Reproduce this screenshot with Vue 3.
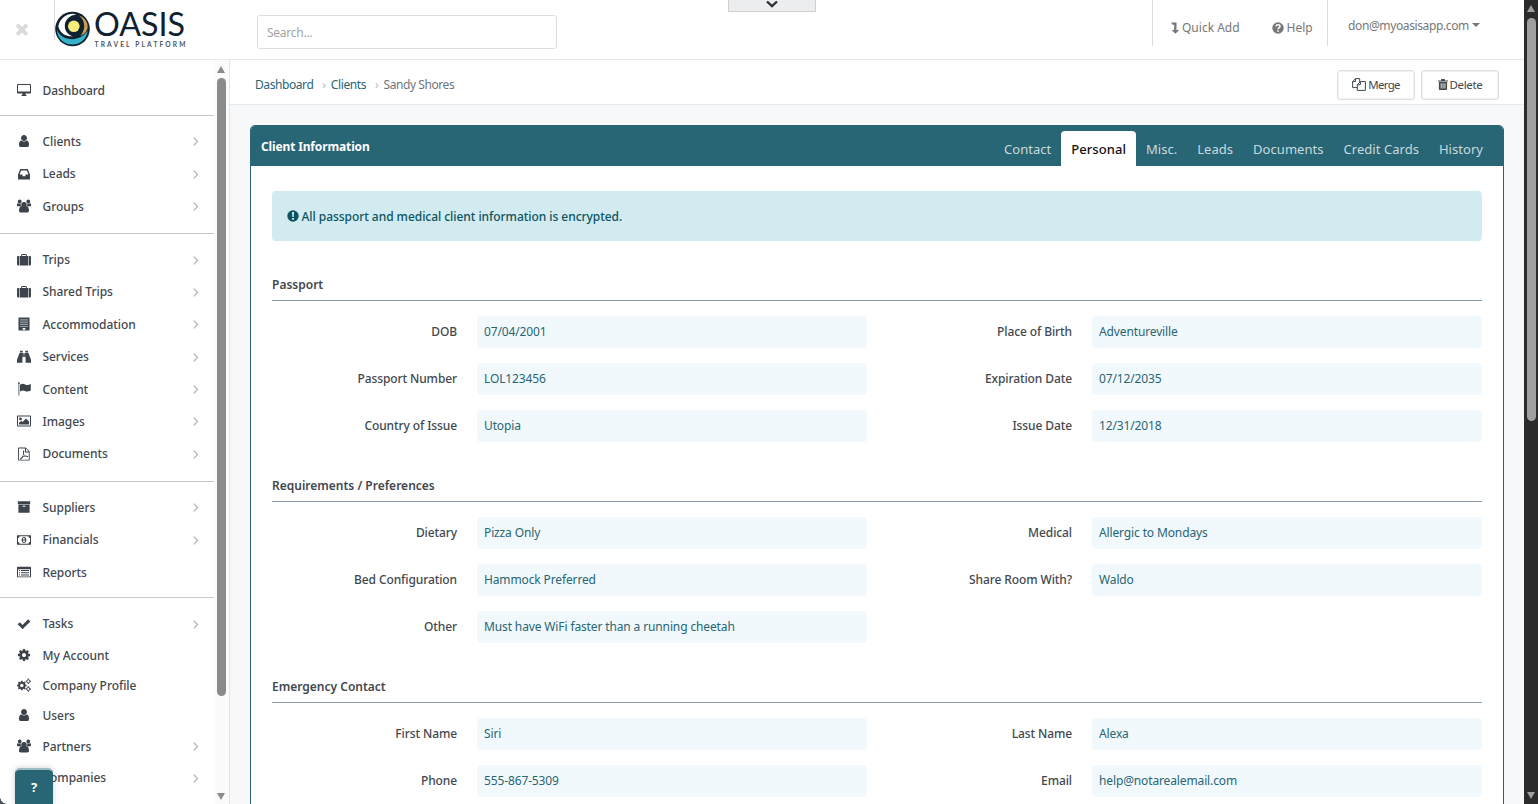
<script setup>
import { ref } from 'vue'

const FA = {
  check: 'M1671 566q0 40-28 68l-724 724-136 136q-28 28-68 28t-68-28l-136-136-362-362q-28-28-28-68t28-68l136-136q28-28 68-28t68 28l294 295 656-657q28-28 68-28t68 28l136 136q28 28 28 68z',
  cog: 'M1152 896q0-106-75-181t-181-75-181 75-75 181 75 181 181 75 181-75 75-181zm512-109v222q0 12-8 23t-20 13l-185 28q-19 54-39 91 35 50 107 138 10 12 10 25t-9 23q-27 37-99 108t-94 71q-12 0-26-9l-138-108q-44 23-91 38-16 136-29 186-7 28-36 28h-222q-14 0-24.5-8.5t-11.5-21.5l-28-184q-49-16-90-37l-141 107q-10 9-25 9-14 0-25-11-126-114-165-168-7-10-7-23 0-12 8-23 15-21 51-66.5t54-70.5q-27-50-41-99l-183-27q-13-2-21-12.5t-8-23.5v-222q0-12 8-23t19-13l186-28q14-46 39-92-40-57-107-138-10-12-10-24 0-10 9-23 26-36 98.5-107.5t94.5-71.5q13 0 26 10l138 107q44-23 91-38 16-136 29-186 7-28 36-28h222q14 0 24.5 8.5t11.5 21.5l28 184q49 16 90 37l142-107q9-9 24-9 13 0 25 10 129 119 165 170 7 8 7 22 0 12-8 23-15 21-51 66.5t-54 70.5q26 50 41 98l183 28q13 2 21 12.5t8 23.5z',
  user: 'M1536 1399q0 109-62.5 187t-150.5 78h-854q-88 0-150.5-78t-62.5-187q0-85 8.5-160.5t31.5-152 58.5-131 94-89 134.5-34.5q131 128 313 128t313-128q76 0 134.5 34.5t94 89 58.5 131 31.5 152 8.5 160.5zm-256-887q0 159-112.5 271.5t-271.5 112.5-271.5-112.5-112.5-271.5 112.5-271.5 271.5-112.5 271.5 112.5 112.5 271.5z',
  times: 'M1490 1322q0 40-28 68l-136 136q-28 28-68 28t-68-28l-294-294-294 294q-28 28-68 28t-68-28l-136-136q-28-28-28-68t28-68l294-294-294-294q-28-28-28-68t28-68l136-136q28-28 68-28t68 28l294 294 294-294q28-28 68-28t68 28l136 136q28 28 28 68t-28 68l-294 294 294 294q28 28 28 68z',
}

// icons on a 14px grid
const icons = {
  desktop: 'M1 1h12a1 1 0 0 1 1 1v7.6a1 1 0 0 1-1 1H8.6v1.2l.9.4v.8h-5v-.8l.9-.4v-1.2H1a1 1 0 0 1-1-1V2a1 1 0 0 1 1-1zm0 1v6.4h12V2z',
  inbox: 'M3.2 2h7.6L13 7.4V12a.6.6 0 0 1-.6.6H1.6A.6.6 0 0 1 1 12V7.4zM4.1 3.5 2.5 7.6h2.6l.8 1.6h2.2l.8-1.6h2.6L9.9 3.5z',
  users: 'M7 2.900a2.700 2.700 0 1 1 0 5.400 2.700 2.700 0 0 1 0-5.400zM2.700.600a1.900 1.900 0 1 1 0 3.800 1.900 1.900 0 0 1 0-3.800zM11.300.600a1.900 1.900 0 1 1 0 3.800 1.900 1.900 0 0 1 0-3.800zM0 7V5.400C0 4.500.5 4 1 4.200c1 .7 1.800.7 2.800.2A3.400 3.400 0 0 0 4.400 7.300H.9A.9.900 0 0 1 0 7zM14 7V5.400C14 4.500 13.500 4 13 4.200c-1 .7-1.800.7-2.800.2A3.400 3.400 0 0 1 9.600 7.300h3.500A.9.900 0 0 0 14 7zM2 11.800c0-2.800.8-4.600 2.500-4.600 1.600 1.400 3.400 1.400 5 0 1.700 0 2.500 1.800 2.500 4.600 0 1-.7 1.700-1.700 1.700H3.700c-1 0-1.700-.7-1.700-1.700z',
  suitcase: 'M0 4.200A1.200 1.200 0 0 1 1.200 3h.9v9.500h-.9A1.200 1.200 0 0 1 0 11.300zM14 4.200A1.200 1.200 0 0 0 12.800 3h-.9v9.500h.9a1.200 1.200 0 0 0 1.200-1.200zM2.700 3H4.200V1.900c0-.5.4-.9.900-.9h3.800c.5 0 .9.400.9.900V3h1.500v9.500H2.700zM5.200 2v1h3.600V2z',
  building: 'M1.500.5h11v13h-11zM3.500 2.300v1.200h1V2.300zm2 0v1.200h1V2.300zm2 0v1.200h1V2.300zm2 0v1.200h1V2.300zM3.500 4.500v1.200h1V4.500zm2 0v1.200h1V4.500zm2 0v1.200h1V4.500zm2 0v1.200h1V4.500zM3.500 6.700v1.200h1V6.700zm2 0v1.200h1V6.700zm2 0v1.200h1V6.700zm2 0v1.200h1V6.700zM3.500 8.900v1.200h1V8.900zm2 0v1.200h1V8.900zm2 0v1.200h1V8.900zm2 0v1.200h1V8.900zM5.700 11v1.700h2.600V11z',
  binoculars: 'M3 .8h2.700v1.500H3zM8.300.8H11v1.500H8.300zM2.700 2.800h3.200v4.400H5.400v5.600H0V9.700zM8.100 2.800h3.200L14 9.700v3.100H8.600V7.200h-.5zM6.200 3.300h1.600v3.600H6.200z',
  flag: 'M1 1.200a.9.900 0 1 1 1.300.8v11.400h-.8V2A.9.900 0 0 1 1 1.200zM3 2.800c2-1.200 3.400-1.200 5.200-.3 1.800.8 3.200.7 5.600-.5v6.400c-2.400 1.400-4 1.400-5.800.5-1.600-.8-3-.7-5 .5z',
  image: 'M.8 1.500h12.400c.5 0 .8.300.8.800v9.400c0 .5-.3.800-.8.800H.8c-.5 0-.8-.3-.8-.8V2.300c0-.5.300-.8.800-.8zM1 2.500v9h12v-9zM3.500 3.500a1.400 1.400 0 1 1 0 2.800 1.400 1.400 0 0 1 0-2.800zM2 10.500V9l2.200-2.200 1.300 1.300L9 4.600l3 3v2.900z',
  pdf: 'M1.800.5h6.900l4 4v8.400c0 .4-.3.700-.7.700H1.800c-.4 0-.7-.3-.7-.7V1.200c0-.4.300-.7.700-.7zM2 1.400v11.300h9.800V5.400H8V1.400zm7 .3v2.800h2.700zM6.200 3.500h.9c.2 1.300 0 2.200-.2 3 .4 1.200 1 1.900 2 2.300 1.200 0 2.300.1 2.300.7 0 .8-1.300.6-2.500.1-1 .1-2.100.400-3.100.800-.8 1.400-1.700 2.200-2.400 1.800-.5-.5.400-1.500 1.700-2.200.6-1 1-2.200 1.300-3.300-.3-1-.4-2.200 0-3.200zm.4 4.200L5.900 9.300 8 8.900z',
  archive: 'M.8 1.200h12.400v3H.8zM1.400 4.700h11.200v8H1.400zM5.600 5.800v.9h2.800v-.9z',
  money: 'M0 2.300h14v9.400H0zM2.600 3.300A1.700 1.700 0 0 1 1 4.900v4.200a1.700 1.700 0 0 1 1.600 1.600h8.800A1.700 1.700 0 0 1 13 9.100V4.900a1.700 1.700 0 0 1-1.600-1.600zM7 3.900c1.400 0 2.400 1.500 2.400 3.100S8.400 10.100 7 10.100 4.600 8.600 4.600 7 5.600 3.900 7 3.900zM6.700 5 5.700 5.700l.4.600.4-.2v2.200h-.7V9h2.400v-.7h-.7V5z',
  list: 'M.8 1.700h12.400c.5 0 .8.300.8.800v9c0 .5-.3.800-.8.800H.8c-.5 0-.8-.3-.8-.8v-9c0-.5.300-.8.800-.8zM1 4.200v7.200h12V4.200zM2 5h1v1H2zM4 5h8v1H4zM2 7.200h1v1H2zM4 7.200h8v1H4zM2 9.400h1v1H2zM4 9.400h8v1H4z',
  cogs: 'M4 2.700h1.600l.2 1.200.8.400 1-.7 1.100 1.100-.7 1 .4.800 1.200.2v1.600l-1.200.2-.4.800.7 1-1.100 1.100-1-.7-.8.400-.2 1.200H4l-.2-1.200-.8-.4-1 .7L.9 10.300l.7-1-.4-.8L0 8.300V6.700l1.200-.2.400-.8-.7-1L2 3.600l1 .7.8-.4zM4.800 5.700a1.800 1.800 0 1 0 0 3.600 1.800 1.800 0 0 0 0-3.600z',
}

const menu = [
  [{ label: 'Dashboard', icon: 'desktop' }],
  [
    { label: 'Clients', icon: 'user', sub: true },
    { label: 'Leads', icon: 'inbox', sub: true },
    { label: 'Groups', icon: 'users', sub: true },
  ],
  [
    { label: 'Trips', icon: 'suitcase', sub: true },
    { label: 'Shared Trips', icon: 'suitcase', sub: true },
    { label: 'Accommodation', icon: 'building', sub: true },
    { label: 'Services', icon: 'binoculars', sub: true },
    { label: 'Content', icon: 'flag', sub: true },
    { label: 'Images', icon: 'image', sub: true },
    { label: 'Documents', icon: 'pdf', sub: true },
  ],
  [
    { label: 'Suppliers', icon: 'archive', sub: true },
    { label: 'Financials', icon: 'money', sub: true },
    { label: 'Reports', icon: 'list' },
  ],
  [
    { label: 'Tasks', icon: 'check', sub: true },
    { label: 'My Account', icon: 'cog' },
    { label: 'Company Profile', icon: 'cogs' },
    { label: 'Users', icon: 'user' },
    { label: 'Partners', icon: 'users', sub: true },
    { label: 'Companies', icon: 'building', sub: true },
  ],
]

const tabs = ['Contact', 'Personal', 'Misc.', 'Leads', 'Documents', 'Credit Cards', 'History']
const activeTab = ref('Personal')

const sections = [
  {
    title: 'Passport',
    fields: [
      ['DOB', '07/04/2001'],
      ['Place of Birth', 'Adventureville'],
      ['Passport Number', 'LOL123456'],
      ['Expiration Date', '07/12/2035'],
      ['Country of Issue', 'Utopia'],
      ['Issue Date', '12/31/2018'],
    ],
  },
  {
    title: 'Requirements / Preferences',
    fields: [
      ['Dietary', 'Pizza Only'],
      ['Medical', 'Allergic to Mondays'],
      ['Bed Configuration', 'Hammock Preferred'],
      ['Share Room With?', 'Waldo'],
      ['Other', 'Must have WiFi faster than a running cheetah'],
    ],
  },
  {
    title: 'Emergency Contact',
    fields: [
      ['First Name', 'Siri'],
      ['Last Name', 'Alexa'],
      ['Phone', '555-867-5309'],
      ['Email', 'help@notarealemail.com'],
    ],
  },
]
</script>

<template>
  <div class="window">
    <div class="app">
      <header class="topbar">
        <div class="close-menu">
          <svg width="18" height="18" viewBox="0 0 1792 1792"><path :d="FA.times" /></svg>
        </div>
        <div class="brand">
          <svg width="136" height="44" viewBox="0 0 136 44">
            <circle cx="18.5" cy="22" r="17.3" fill="#10212f" />
            <path d="M4.300 19A14.800 14.800 0 0 1 22.500 7.200C15 8.500 10.600 13 10.800 19.500 11 24.500 14.500 28 19 29.300 11 29.800 5.500 25.500 4.300 19z" fill="#fff" />
            <path d="M2.900 22.500C5.500 29.500 12.500 33 20.500 32 26 31.200 30.500 28.500 33.600 23.500 33 31.500 26.500 37.600 18.500 37.600 9.800 37.600 3 31 2.900 22.500z" fill="#35b4c9" />
            <path d="M24.500 8.300C31 10.500 35 16.500 33.300 22.300 31.800 25.600 29.500 27.800 26.300 29 29.800 25 31 20.500 29.800 15.800 29 12.500 27.300 10 24.500 8.300z" fill="#cf9d50" />
            <circle cx="19.8" cy="19.300" r="5.800" fill="#f5ee7b" />
            <text class="brand-name" x="40" y="29" textLength="91" lengthAdjust="spacingAndGlyphs">OASIS</text>
            <text class="brand-sub" x="40.5" y="39.800" textLength="91">TRAVEL PLATFORM</text>
          </svg>
        </div>
        <input class="search" type="text" placeholder="Search...">
        <div class="top-links">
          <a class="top-link">
            <svg width="9" height="12" viewBox="0 0 9 12"><path d="M0 .5h5.500v7.500h2.700L4.400 11.800.6 8h2.600V2.700H1.700z" /></svg>
            Quick Add
          </a>
          <a class="top-link help-link">
            <svg width="12" height="12" viewBox="0 0 12 12">
              <circle cx="6" cy="6" r="5.7" />
              <path d="M4 4.500C4.200 2.300 8 2.300 8 4.500 8 5.900 6 5.800 6 7.200" fill="none" stroke="#fff" stroke-width="1.5" />
              <path d="M5.200 8.200h1.600v1.500H5.200z" fill="#fff" />
            </svg>
            Help
          </a>
        </div>
        <div class="account">don@myoasisapp.com<i class="caret"></i></div>
        <div class="pull-tab">
          <svg width="14" height="12" viewBox="0 0 14 12"><path d="M2 2.500 7 7.200 12 2.500" /></svg>
        </div>
      </header>

      <div class="body">
        <aside class="sidebar">
          <nav class="menu">
            <ul v-for="(group, i) in menu" :key="i" class="menu-group">
              <li v-for="item in group" :key="item.label" class="menu-item" :class="{ 'has-sub': item.sub || item.icon === 'list' }">
                <svg v-if="FA[item.icon]" class="menu-icon" viewBox="0 0 1792 1792"><path :d="FA[item.icon]" /></svg>
                <svg v-else class="menu-icon" viewBox="0 0 14 14">
                  <path :d="icons[item.icon]" fill-rule="evenodd" />
                  <g v-if="item.icon === 'cogs'" class="small-cogs">
                    <circle cx="11.3" cy="3.3" r="1.6" />
                    <circle cx="11.3" cy="11" r="1.6" />
                    <path d="M11.300.5v1M11.300 5v1M8.700 3.300h1M13 3.300h1M11.300 8.200v1M11.300 12.800v1M8.700 11h1M13 11h1" />
                  </g>
                </svg>
                <span class="menu-label">{{ item.label }}</span>
                <svg v-if="item.sub" class="menu-arrow" viewBox="0 0 6 9"><path d="M.8.700 4.600 4.500.8 8.300" /></svg>
              </li>
            </ul>
          </nav>
          <div class="scrollbar side-scroll">
            <i class="arrow up"></i>
            <i class="thumb"></i>
            <i class="arrow down"></i>
          </div>
        </aside>

        <main class="main">
          <div class="crumb-bar">
            <div class="crumbs">
              <a>Dashboard</a><i>›</i><a>Clients</a><i>›</i><span>Sandy Shores</span>
            </div>
            <div class="actions">
              <button class="btn">
                <svg width="14" height="13" viewBox="0 0 14 13">
                  <path d="M3.600.6h4.100V4M3.600.6.600 3.600v6h4.600M3.600.6v3H.6M8.400 3.600h5v8.800H5.300V6.700zM8.400 3.600v3.100H5.300" fill="none" stroke="currentColor" />
                </svg>
                <span>Merge</span>
              </button>
              <button class="btn delete">
                <svg width="10" height="11" viewBox="0 0 11 12">
                  <path d="M3.500 0h4v1.500H11v1.300H0V1.500h3.500zM1 3.300h9V11a1 1 0 0 1-1 1H2a1 1 0 0 1-1-1zM3 4.500v6h.9v-6zm2.100 0v6H6v-6zm2.100 0v6h.9v-6z" fill-rule="evenodd" />
                </svg>
                <span>Delete</span>
              </button>
            </div>
          </div>

          <section class="panel">
            <div class="panel-head">
              <h1 class="panel-title">Client Information</h1>
              <div class="tabs">
                <a v-for="tab in tabs" :key="tab" class="tab" :class="{ active: tab === activeTab }" @click="activeTab = tab">{{ tab }}</a>
              </div>
            </div>
            <div class="panel-body">
              <div class="alert">
                <svg width="12" height="12" viewBox="0 0 12 12">
                  <path d="M6 .3a5.700 5.700 0 1 1 0 11.400A5.700 5.700 0 0 1 6 .3zM5 2l.3 5h1.400L7 2zM5.100 8v1.700h1.800V8z" fill-rule="evenodd" />
                </svg>
                <span>All passport and medical client information is encrypted.</span>
              </div>
              <div v-for="s in sections" :key="s.title" class="section">
                <h2 class="section-title">{{ s.title }}</h2>
                <div class="fields">
                  <div v-for="[label, value] in s.fields" :key="label" class="field">
                    <label>{{ label }}</label>
                    <div class="value">{{ value }}</div>
                  </div>
                </div>
              </div>
            </div>
          </section>
        </main>
      </div>
      <i class="corner"></i>
      <button class="help-btn">?</button>
    </div>
    <div class="scrollbar page-scroll">
      <i class="arrow up"></i>
      <i class="thumb"></i>
      <i class="arrow down"></i>
    </div>
  </div>
</template>

<style>
body {
  margin: 0;
  overflow: hidden;
}
</style>

<style scoped>
* {
  box-sizing: border-box;
}

.window {
  display: flex;
  height: 804px;
  overflow: hidden;
  font-family: "Noto Sans", "Open Sans", sans-serif;
  font-size: 12px;
  color: #42484f;
}

.app {
  position: relative;
  flex: 1;
  display: flex;
  flex-direction: column;
  overflow: hidden;
  background: #f6f8fa;
}

/* header */
.topbar {
  position: relative;
  display: flex;
  flex: none;
  height: 60px;
  background: #fff;
  border-bottom: 1px solid #e6e8ea;
}

.close-menu {
  width: 55px;
  height: 40px;
  padding: 20px 0 0 13px;
  border-right: 1px solid #dcdcdc;
}

.close-menu svg {
  display: block;
  fill: #dadada;
}

.brand {
  width: 202px;
  padding-top: 7px;
}

.brand svg {
  display: block;
  margin-left: -1px;
  overflow: visible;
}

.brand-name {
  font-family: Lato, sans-serif;
  font-size: 33px;
  fill: #10212f;
}

.brand-sub {
  font-family: Lato, sans-serif;
  font-size: 6.6px;
  font-weight: 700;
  fill: #4a5560;
}

.search {
  width: 300px;
  height: 34px;
  margin: 15px 0 0;
  padding: 0 9px;
  border: 1px solid #dbdee0;
  border-radius: 3px;
  font-family: inherit;
  font-size: 12px;
  letter-spacing: -0.25px;
  background: #fff;
}

.search::placeholder {
  color: #a3a3a3;
}

.top-links {
  display: flex;
  width: 176px;
  height: 46px;
  margin-left: auto;
  padding: 18px 0 0 18px;
  border-left: 1px solid #dcdcdc;
  border-right: 1px solid #dcdcdc;
}

.top-link {
  display: flex;
  align-items: center;
  height: 19px;
  gap: 2px;
  color: #777;
  fill: #777;
}

.help-link {
  margin-left: 32px;
  gap: 3px;
}

.account {
  display: flex;
  align-items: center;
  width: 196px;
  height: 19px;
  margin-top: 16px;
  padding-left: 20px;
  letter-spacing: -0.38px;
  color: #777;
}

.caret {
  margin: -1px 0 0 3px;
  border: 4px solid transparent;
  border-top-color: #777;
  border-bottom: 0;
}

.pull-tab {
  position: absolute;
  left: 728px;
  top: 0;
  width: 88px;
  height: 12px;
  padding-left: 36px;
  background: #ebedef;
  border: 1px solid #cfcfcf;
  border-top: 0;
}

.pull-tab svg {
  display: block;
  margin-top: -1px;
  fill: none;
  stroke: #2b333b;
  stroke-width: 2.4;
}

/* sidebar */
.body {
  display: flex;
  flex: 1;
  min-height: 0;
}

.sidebar {
  display: flex;
  flex: none;
  width: 230px;
  overflow: hidden;
  background: #fff;
  border-right: 1px solid #e3e6e8;
}

.menu {
  width: 214px;
}

.menu-group {
  margin: 0;
  padding: 9.2px 0 10.8px;
  list-style: none;
  border-bottom: 1px solid #c9c9c9;
}

.menu-group:first-child {
  padding: 15px 0 10px;
}

.menu-group:nth-child(4) {
  padding-bottom: 8.6px;
}

.menu-item {
  display: flex;
  align-items: center;
  height: 30px;
  padding: 0 15px 0 17px;
}

.menu-item.has-sub {
  height: 32.4px;
}

.menu-group:nth-child(5) .has-sub:first-child {
  height: 33.4px;
}

.menu-group:nth-child(5) .has-sub:nth-child(5) {
  height: 31.4px;
}

.menu-icon {
  width: 14px;
  height: 14px;
  margin-right: 11.5px;
  fill: #3c434a;
}

.small-cogs {
  fill: none;
  stroke: #3c434a;
}

.menu-label {
  flex: 1;
  font-weight: 500;
  letter-spacing: -0.06px;
}

.menu-arrow {
  width: 6px;
  height: 9px;
  margin-top: 1px;
  fill: none;
  stroke: #b0b0b0;
  stroke-width: 1.2;
}

/* scrollbars */
.scrollbar {
  display: flex;
  flex-direction: column;
  align-items: center;
}

.side-scroll {
  width: 15px;
  padding: 6px 1px 4px 0;
  background: #fbfbfb;
  --bar: #8b8b8b;
}

.page-scroll {
  width: 14px;
  padding: 5px 0 5px;
  background: #2b2b2b;
  --bar: #9f9f9f;
}

.thumb {
  width: 9px;
  border-radius: 5px;
  background: var(--bar);
}

.side-scroll .thumb {
  height: 618px;
  margin-top: 5px;
}

.page-scroll .thumb {
  height: 403px;
  margin-top: 6px;
}

.arrow {
  border: 4.5px solid transparent;
}

.arrow.up {
  border-top: 0;
  border-bottom: 7px solid var(--bar);
}

.arrow.down {
  margin-top: auto;
  border-bottom: 0;
  border-top: 7px solid var(--bar);
}

/* content */
.main {
  flex: 1;
  min-width: 0;
}

.crumb-bar {
  display: flex;
  align-items: center;
  justify-content: space-between;
  height: 45px;
  padding: 5px 25px 0;
  background: #fff;
  border-bottom: 1px solid #e6e9ec;
}

.crumbs {
  display: flex;
  align-items: center;
  letter-spacing: -0.42px;
  color: #6f767d;
}

.crumbs a {
  color: #286575;
}

.crumbs i {
  width: 17.5px;
  padding-left: 9px;
  font-style: normal;
  color: #b5b9bd;
}

.actions {
  display: flex;
  gap: 6px;
}

.btn {
  display: flex;
  align-items: center;
  justify-content: center;
  gap: 2px;
  width: 78px;
  height: 30px;
  padding: 0;
  border: 1px solid #dfe1e5;
  border-radius: 3px;
  box-shadow: inset 0 0 0 1px #f1f2f4;
  background: #fff;
  font-family: inherit;
  font-size: 11.5px;
  letter-spacing: -0.7px;
  color: #42484f;
  fill: #42484f;
}

.btn.delete {
  letter-spacing: -0.35px;
}

.panel {
  margin: 20px 20px 0;
  height: 720px;
  border: 1px solid #286575;
  border-radius: 5px 5px 0 0;
  background: #fff;
}

.panel-head {
  display: flex;
  justify-content: space-between;
  height: 40px;
  padding: 5px 10px 0;
  background: #286575;
  border-radius: 4px 4px 0 0;
}

.panel-title {
  margin: 0;
  line-height: 31px;
  font-size: 12px;
  font-weight: 700;
  letter-spacing: -0.14px;
  color: #fff;
}

.tabs {
  display: flex;
}

.tab {
  height: 35px;
  padding: 0 10px;
  line-height: 36px;
  font-size: 13px;
  letter-spacing: 0.04px;
  color: #c9dade;
  border-radius: 4px 4px 0 0;
  cursor: pointer;
}

.tab.active {
  font-weight: 500;
  color: #111;
  background: #fff;
}

.panel-body {
  padding: 25px 21px 0;
}

.alert {
  display: flex;
  align-items: center;
  gap: 2.5px;
  height: 50px;
  padding-left: 15px;
  margin-bottom: 27px;
  border-radius: 4px;
  background: #d1ebf0;
  color: #0c5460;
  fill: #0c5460;
  font-weight: 500;
  letter-spacing: -0.05px;
}

.section {
  margin-bottom: 27px;
}

.section-title {
  height: 33px;
  margin: 0 0 15px;
  line-height: 33px;
  font-size: 12px;
  font-weight: 600;
  border-bottom: 1px solid #8a9bb0;
}

.fields {
  display: grid;
  grid-template-columns: 595px 595px;
  gap: 15px 20px;
}

.field {
  display: flex;
  gap: 20px;
}

.field label {
  width: 185px;
  line-height: 31px;
  text-align: right;
  font-weight: 500;
  letter-spacing: -0.1px;
}

.value {
  flex: 1;
  height: 32px;
  padding-left: 7px;
  line-height: 31px;
  letter-spacing: -0.13px;
  border-radius: 4px;
  background: #f1f9fc;
  color: #286575;
}

/* floating bits */
.help-btn {
  position: absolute;
  left: 15px;
  bottom: 0;
  width: 38px;
  height: 36px;
  padding: 0;
  border: 0;
  border-top: 2px solid #9dbcc3;
  border-radius: 5px 5px 0 0;
  background: #286575;
  box-shadow: 0 0 6px rgba(0, 0, 0, 0.2);
  font-family: inherit;
  font-size: 13px;
  font-weight: 700;
  color: #fff;
}

.corner {
  position: absolute;
  left: 0;
  bottom: 0;
  width: 7px;
  height: 7px;
  background: radial-gradient(circle at 100% 0, transparent 6.5px, #4d5357 7px);
}
</style>
